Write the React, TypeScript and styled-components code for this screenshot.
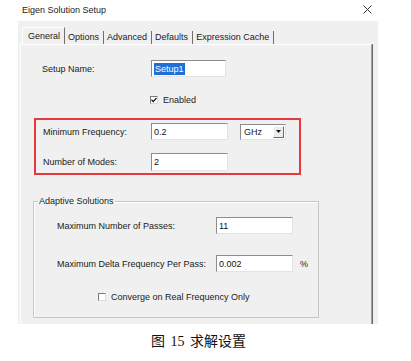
import styled, { createGlobalStyle } from "styled-components";

const GlobalStyle = createGlobalStyle`
  html, body {
    margin: 0;
    padding: 0;
    background: #ffffff;
  }
  body {
    font-family: "Liberation Sans", Arial, sans-serif;
    font-size: 9px;
    color: #1a1a1a;
  }
`;

const Page = styled.div`
  width: 411px;
  height: 361px;
  display: flex;
  flex-direction: column;
`;

const TitleBar = styled.div`
  height: 21px;
  display: flex;
  align-items: center;
  justify-content: space-between;
  padding: 0 39px 2px 22px;
  box-sizing: border-box;
`;

const Title = styled.span`
  font-size: 9px;
  color: #222;
`;

const Dialog = styled.div`
  margin-left: 18px;
  width: 360px;
  height: 303px;
  background: #f0f0f0;
  display: flex;
  flex-direction: column;
`;

const TabStrip = styled.div`
  display: flex;
  align-items: flex-end;
  height: 23px;
  padding-left: 4px;
`;

const Tab = styled.div<{ active?: boolean }>`
  height: ${p => (p.active ? 17 : 13)}px;
  padding: 0 4px 0 ${p => (p.active ? 5 : 3)}px;
  display: flex;
  align-items: ${p => (p.active ? "flex-start" : "flex-end")};
  padding-top: ${p => (p.active ? 3 : 0)}px;
  box-sizing: border-box;
  border-right: 1px solid #6f6f6f;
  border-left: ${p => (p.active ? "1px solid #ffffff" : "none")};
  border-top: ${p => (p.active ? "1px solid #ffffff" : "none")};
  line-height: 11px;
  padding-bottom: ${p => (p.active ? 0 : 1)}px;
`;

const Panel = styled.div`
  flex: 1;
  margin-left: 2px;
  width: 352px;
  border-top: 1px solid #ffffff;
  border-left: 1px solid #ffffff;
  border-right: 1px solid #a0a0a0;
  box-shadow: 1px 0 0 #696969;
  display: flex;
  flex-direction: column;
  box-sizing: border-box;
`;

const Row = styled.div<{ top: number; indent: number; h?: number }>`
  display: flex;
  align-items: center;
  margin-top: ${p => p.top}px;
  padding-left: ${p => p.indent}px;
  height: ${p => p.h ?? 17}px;
`;

const Label = styled.span<{ w: number }>`
  width: ${p => p.w}px;
  flex-shrink: 0;
`;

const Input = styled.div<{ w?: number }>`
  width: ${p => p.w ?? 77}px;
  height: 100%;
  box-sizing: border-box;
  background: #ffffff;
  border-top: 1px solid #8c8c8c;
  border-left: 1px solid #8c8c8c;
  border-right: 1px solid #e3e3e3;
  border-bottom: 1px solid #e3e3e3;
  display: flex;
  align-items: center;
  padding-left: 2px;
  color: #111;
`;

const Selected = styled.span`
  background: #1f6fd6;
  color: #ffffff;
  padding: 0 1px;
  line-height: 12px;
`;

const Select = styled.div`
  margin-left: 12px;
  width: 46px;
  height: 16px;
  box-sizing: border-box;
  background: #ffffff;
  border-top: 1px solid #8c8c8c;
  border-left: 1px solid #8c8c8c;
  border-right: 1px solid #e3e3e3;
  border-bottom: 1px solid #e3e3e3;
  display: flex;
  align-items: center;
  justify-content: space-between;
  padding-left: 3px;
`;

const DropButton = styled.div`
  width: 11px;
  height: 12px;
  margin-right: 1px;
  background: #ececec;
  border-top: 1px solid #ffffff;
  border-left: 1px solid #ffffff;
  border-right: 1px solid #6a6a6a;
  border-bottom: 1px solid #6a6a6a;
  box-sizing: border-box;
  display: flex;
  align-items: center;
  justify-content: center;
`;

const CheckRow = styled.label<{ top: number; indent: number }>`
  display: flex;
  align-items: center;
  gap: 5px;
  margin-top: ${p => p.top}px;
  padding-left: ${p => p.indent}px;
  height: 16px;
`;

const Box = styled.span`
  width: 8px;
  height: 8px;
  box-sizing: border-box;
  background: #ffffff;
  border-top: 1px solid #7a7a7a;
  border-left: 1px solid #7a7a7a;
  border-right: 1px solid #dcdcdc;
  border-bottom: 1px solid #dcdcdc;
  display: flex;
  align-items: center;
  justify-content: center;
`;

const Highlight = styled.div`
  margin: 10px 0 0 13px;
  width: 267px;
  height: 57px;
  box-sizing: border-box;
  border: 2px solid #e8383a;
  padding-top: 3px;
  display: flex;
  flex-direction: column;
`;

const Group = styled.fieldset`
  margin: 21px 0 0 12px;
  width: 286px;
  height: 122px;
  box-sizing: border-box;
  padding: 0;
  border: 1px solid #c6c6c6;
  box-shadow: inset 1px 1px 0 #ffffff;
  display: flex;
  flex-direction: column;
`;

const Legend = styled.legend`
  margin-left: 4px;
  padding: 0 1px;
  line-height: 11px;
`;

const Unit = styled.span`
  margin-left: 7px;
`;

const Caption = styled.div`
  margin-top: 10px;
  font-family: "Liberation Serif", "Noto Sans CJK SC", serif;
  font-size: 14px;
  line-height: 16px;
  text-align: center;
  padding-right: 14px;
  color: #111;
  word-spacing: 2px;
`;

function Check() {
  return (
    <svg width="6" height="6" viewBox="0 0 6 6">
      <path d="M0.5 2.8 L2.3 4.6 L5.5 0.8" stroke="#111" strokeWidth="1.3" fill="none" />
    </svg>
  );
}

export default function App() {
  return (
    <>
      <GlobalStyle />
      <Page>
        <TitleBar>
          <Title>Eigen Solution Setup</Title>
          <svg width="9" height="9" viewBox="0 0 9 9">
            <path d="M0.5 0.5 L8.5 8.5 M8.5 0.5 L0.5 8.5" stroke="#333" strokeWidth="1" />
          </svg>
        </TitleBar>
        <Dialog>
          <TabStrip>
            <Tab active>General</Tab>
            <Tab>Options</Tab>
            <Tab>Advanced</Tab>
            <Tab>Defaults</Tab>
            <Tab>Expression Cache</Tab>
          </TabStrip>
          <Panel>
            <Row top={15} indent={21}>
              <Label w={109}>Setup Name:</Label>
              <Input w={75}>
                <Selected>Setup1</Selected>
              </Input>
            </Row>
            <CheckRow top={15} indent={129}>
              <Box>
                <Check />
              </Box>
              Enabled
            </CheckRow>
            <Highlight>
              <Row top={0} indent={7}>
                <Label w={108}>Minimum Frequency:</Label>
                <Input>0.2</Input>
                <Select>
                  GHz
                  <DropButton>
                    <svg width="5" height="3" viewBox="0 0 5 3">
                      <path d="M0 0 H5 L2.5 3 Z" fill="#111" />
                    </svg>
                  </DropButton>
                </Select>
              </Row>
              <Row top={13} indent={7} h={18}>
                <Label w={108}>Number of Modes:</Label>
                <Input>2</Input>
              </Row>
            </Highlight>
            <Group>
              <Legend>Adaptive Solutions</Legend>
              <Row top={10} indent={23}>
                <Label w={159}>Maximum Number of Passes:</Label>
                <Input>11</Input>
              </Row>
              <Row top={21} indent={23}>
                <Label w={159}>Maximum Delta Frequency Per Pass:</Label>
                <Input>0.002</Input>
                <Unit>%</Unit>
              </Row>
              <CheckRow top={17} indent={64}>
                <Box />
                Converge on Real Frequency Only
              </CheckRow>
            </Group>
          </Panel>
        </Dialog>
        <Caption>图 15 求解设置</Caption>
      </Page>
    </>
  );
}
